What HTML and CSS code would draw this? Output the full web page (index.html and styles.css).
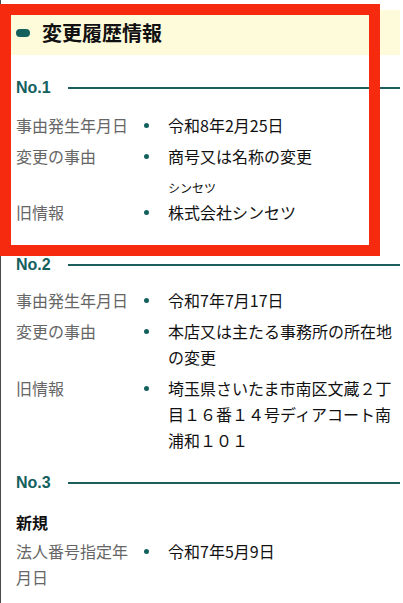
FILE: index.html
```html
<!DOCTYPE html>
<html lang="ja">
<head>
<meta charset="utf-8">
<link rel="stylesheet" href="styles.css">
</head>
<body>
<div class="page">
  <div class="title-bar">
    <span class="pill"></span>
    <h2 class="title">変更履歴情報</h2>
  </div>

  <section class="entry entry-1">
    <div class="entry-head"><span class="no">No.1</span><span class="rule"></span></div>
    <div class="rows">
      <div class="row"><div class="label">事由発生年月日</div><div class="dot"></div><div class="value">令和8年2月25日</div></div>
      <div class="row"><div class="label">変更の事由</div><div class="dot"></div><div class="value">商号又は名称の変更</div></div>
      <div class="row ruby-row"><div class="label">旧情報</div><div class="dot"></div><div class="value"><span class="kana">シンセツ</span><span class="base">株式会社シンセツ</span></div></div>
    </div>
  </section>

  <section class="entry entry-2">
    <div class="entry-head"><span class="no">No.2</span><span class="rule"></span></div>
    <div class="rows">
      <div class="row"><div class="label">事由発生年月日</div><div class="dot"></div><div class="value">令和7年7月17日</div></div>
      <div class="row"><div class="label">変更の事由</div><div class="dot"></div><div class="value">本店又は主たる事務所の所在地の変更</div></div>
      <div class="row"><div class="label">旧情報</div><div class="dot"></div><div class="value">埼玉県さいたま市南区文蔵２丁目１６番１４号ディアコート南浦和１０１</div></div>
    </div>
  </section>

  <section class="entry entry-3">
    <div class="entry-head"><span class="no">No.3</span><span class="rule"></span></div>
    <div class="kind">新規</div>
    <div class="rows">
      <div class="row"><div class="label">法人番号指定年月日</div><div class="dot"></div><div class="value">令和7年5月9日</div></div>
    </div>
  </section>

  <div class="highlight"></div>
</div>
</body>
</html>
```

FILE: styles.css
```css
* { box-sizing: border-box; }
html, body {
  margin: 0;
  padding: 0;
  background: #ffffff;
}
body {
  font-family: "Noto Sans CJK JP", "Noto Sans", sans-serif;
  color: #1a1a1a;
}
.page {
  position: relative;
  width: 400px;
  min-height: 603px;
  padding-top: 10px;
  border-left: 1px solid #4a4a4a;
}
.title-bar {
  display: flex;
  align-items: center;
  height: 45px;
  background: #fefbdb;
  padding-left: 15px;
}
.pill {
  width: 14px;
  height: 8px;
  border-radius: 4px;
  background: #13605d;
}
.title {
  margin: 0 0 0 12px;
  font-size: 20px;
  font-weight: 700;
  line-height: 1;
  color: #111;
}
.entry {
  padding-left: 15px;
}
.entry-head {
  display: flex;
  align-items: center;
  height: 24px;
}
.entry-1 .entry-head { margin-top: 21px; }
.entry-2 .entry-head { margin-top: 28px; }
.entry-3 .entry-head { margin-top: 18px; }
.no {
  font-family: "Liberation Sans", Arial, sans-serif;
  font-weight: 700;
  font-size: 16px;
  color: #13605d;
  width: 52px;
}
.rule {
  flex: 1;
  height: 2px;
  background: #1b5f5c;
}
.rows {
  display: flex;
  flex-direction: column;
  gap: 5px;
  margin-top: 10px;
}
.entry-1 .rows { margin-top: 12px; }
.row {
  display: grid;
  grid-template-columns: 120px 20px 1fr;
  font-size: 16px;
  line-height: 26px;
}
.label {
  color: #666666;
}
.dot {
  display: flex;
  justify-content: center;
  padding-top: 11px;
}
.dot::before {
  content: "";
  width: 5px;
  height: 5px;
  border-radius: 50%;
  background: #13605d;
}
.value {
  padding-left: 12px;
  padding-right: 4px;
  color: #111;
}
.ruby-row .label,
.ruby-row .dot {
  align-self: end;
}
.ruby-row .dot { height: 26px; }
.kana {
  display: block;
  font-size: 12px;
  line-height: 14px;
  margin-top: 7px;
  margin-bottom: 4px;
}
.base { display: block; }
.kind {
  margin-top: 14px;
  font-size: 16px;
  font-weight: 700;
  line-height: 26px;
  color: #111;
}
.entry-3 .rows { margin-top: 3px; }
.highlight {
  position: absolute;
  left: -1px;
  top: 4px;
  width: 380px;
  height: 252px;
  border: 11px solid #f62a0e;
  pointer-events: none;
}
```
